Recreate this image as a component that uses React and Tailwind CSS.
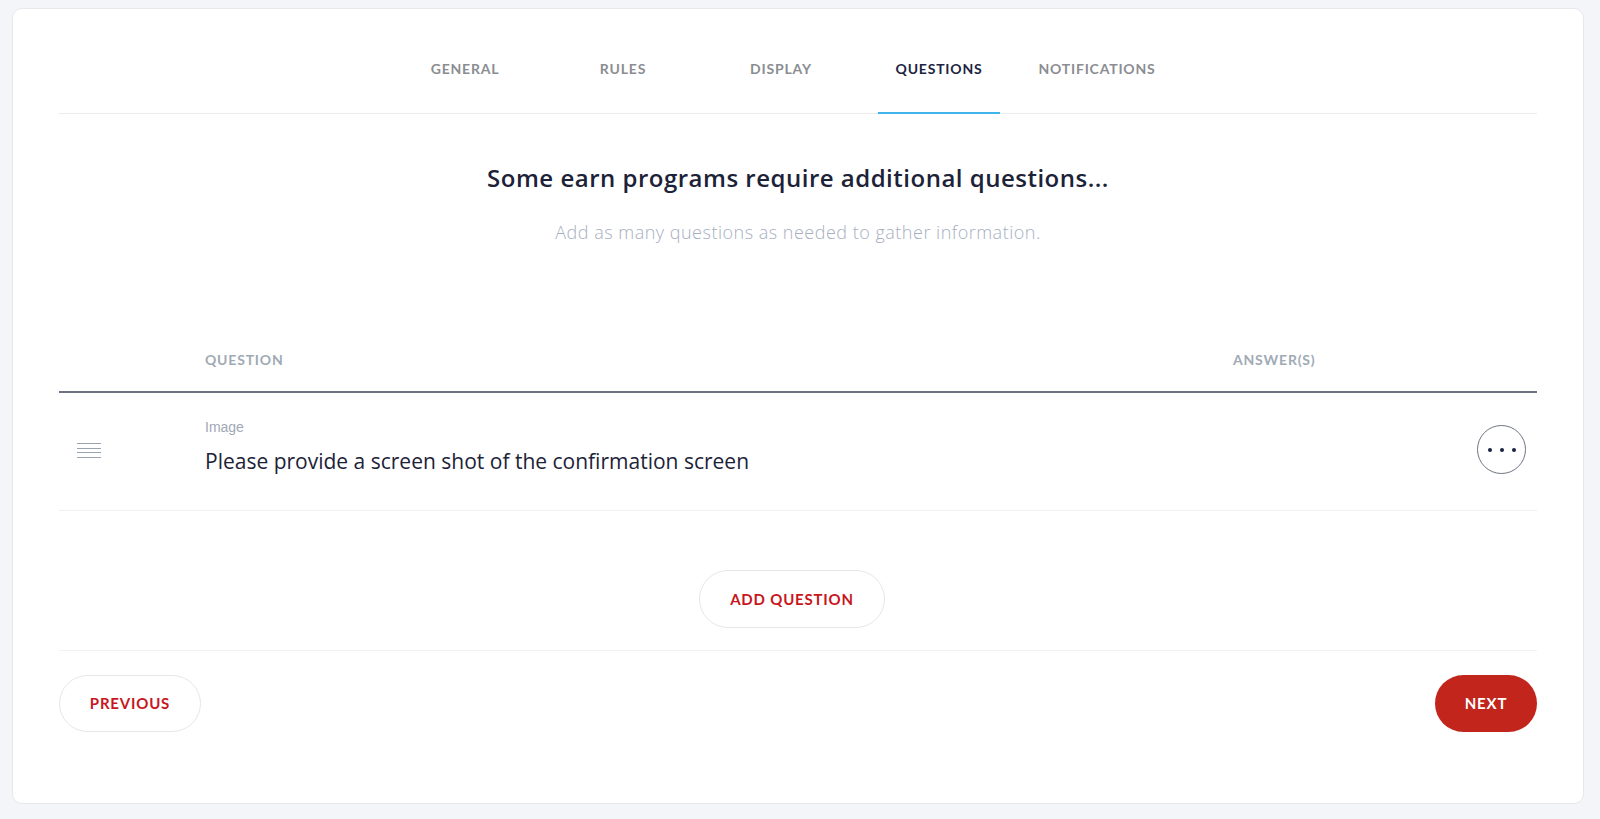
import React from "react";

const tabs = ["GENERAL", "RULES", "DISPLAY", "QUESTIONS", "NOTIFICATIONS"];

export default function App() {
  return (
    <div className="min-h-screen bg-[#f4f5f9] pl-[12px] pr-[16px] pt-[8px] pb-[16px] font-['Lato',sans-serif]">
      <div className="rounded-[10px] border border-[#e6e8ec] bg-white px-[46px] pt-[50px] pb-[71px]">
        {/* Tabs */}
        <div className="flex justify-center gap-[36px] border-b border-[#ebebeb] pr-[34px]">
          {tabs.map((t) => {
            const active = t === "QUESTIONS";
            return (
              <div
                key={t}
                className={
                  active
                    ? "-mb-px w-[122px] border-b-2 border-[#3db5ea] pb-[33px] text-center text-[14px] leading-[20px] font-bold tracking-[0.8px] text-[#1b2441]"
                    : "w-[122px] pb-[34px] text-center text-[14px] leading-[20px] font-bold tracking-[0.8px] text-[#8b8d92]"
                }
              >
                {t}
              </div>
            );
          })}
        </div>

        {/* Heading */}
        <h1 className="mt-[50px] text-center font-['Open_Sans',sans-serif] text-[24px] leading-[28px] font-semibold tracking-[0.5px] text-[#1c2237]">
          Some earn programs require additional questions...
        </h1>
        <p className="mt-[28px] text-center font-['Open_Sans',sans-serif] text-[18px] leading-[24px] font-light tracking-[0.5px] text-[#a7afbf]">
          Add as many questions as needed to gather information.
        </p>

        {/* Table header */}
        <div className="mt-[107px] flex border-b-2 border-[#6e7280] pb-[22px] text-[14px] leading-[18px] font-bold tracking-[0.8px] text-[#a0aab5]">
          <div className="w-[146px]" />
          <div className="flex-1">QUESTION</div>
          <div className="w-[304px]">ANSWER(S)</div>
        </div>

        {/* Row */}
        <div className="flex items-center border-b border-[#eef0f3] pt-[26px] pb-[36px]">
          <div className="mt-[8px] w-[146px] pl-[18px]">
            <div className="flex w-[24px] flex-col gap-[3.7px]">
              <div className="h-px bg-[#9aa3b0]" />
              <div className="h-px bg-[#9aa3b0]" />
              <div className="h-px bg-[#9aa3b0]" />
              <div className="h-px bg-[#9aa3b0]" />
            </div>
          </div>
          <div className="flex-1">
            <div className="font-['Liberation_Sans',sans-serif] text-[14px] leading-[16px] text-[#a0a8b5]">Image</div>
            <div className="mt-[13px] font-['Open_Sans',sans-serif] text-[21px] leading-[26px] text-[#1c2237]">
              Please provide a screen shot of the confirmation screen
            </div>
          </div>
          <div className="mt-[6px] flex w-[304px] justify-end pr-[11px]">
            <button className="flex h-[49px] w-[49px] items-center justify-center gap-[8px] rounded-full border border-[#6e7480] bg-white">
              <span className="h-[4px] w-[4px] rounded-full bg-[#1b2441]" />
              <span className="h-[4px] w-[4px] rounded-full bg-[#1b2441]" />
              <span className="h-[4px] w-[4px] rounded-full bg-[#1b2441]" />
            </button>
          </div>
        </div>

        {/* Add question */}
        <div className="flex justify-center border-b border-[#f0f1f3] pt-[59px] pb-[22px] pr-[12px]">
          <button className="h-[58px] w-[186px] rounded-full border border-[#e5e7eb] bg-white text-[15px] font-bold tracking-[0.8px] text-[#c8161d]">
            ADD QUESTION
          </button>
        </div>

        {/* Footer */}
        <div className="mt-[24px] flex items-center justify-between">
          <button className="h-[57px] w-[142px] rounded-full border border-[#e5e7eb] bg-white text-[15px] font-bold tracking-[0.8px] text-[#c8161d]">
            PREVIOUS
          </button>
          <button className="h-[57px] w-[102px] rounded-full bg-[#c1251c] text-[15px] font-bold tracking-[0.8px] text-white">
            NEXT
          </button>
        </div>
      </div>
    </div>
  );
}
